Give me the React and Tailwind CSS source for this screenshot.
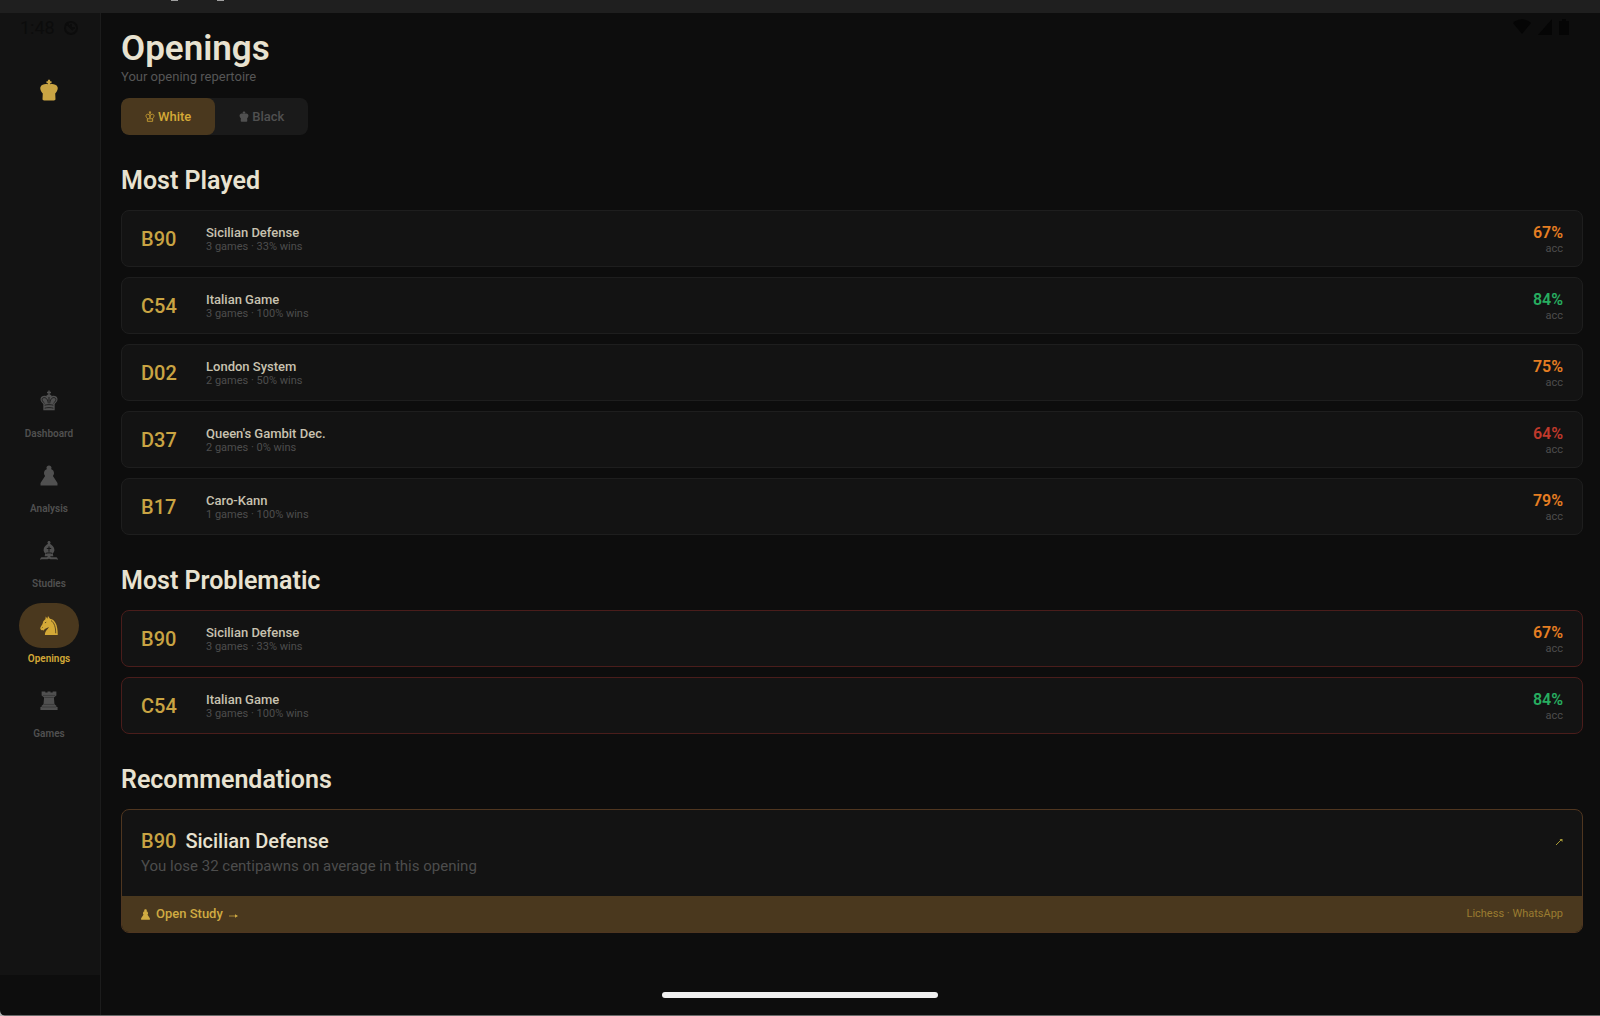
import { useState } from 'react';
import clsx from 'clsx';

const mostPlayed = [
  { eco: 'B90', name: 'Sicilian Defense', games: 3, wins: 33, acc: 67 },
  { eco: 'C54', name: 'Italian Game', games: 3, wins: 100, acc: 84 },
  { eco: 'D02', name: 'London System', games: 2, wins: 50, acc: 75 },
  { eco: 'D37', name: "Queen's Gambit Dec.", games: 2, wins: 0, acc: 64 },
  { eco: 'B17', name: 'Caro-Kann', games: 1, wins: 100, acc: 79 },
];

const mostProblematic = mostPlayed.slice(0, 2);

const navItems = [
  { label: 'Dashboard', icon: KingIcon },
  { label: 'Analysis', icon: PawnIcon },
  { label: 'Studies', icon: BishopIcon },
  { label: 'Openings', icon: KnightIcon },
  { label: 'Games', icon: RookIcon },
];

function SolidKingIcon({ className }) {
  return (
    <svg viewBox="0 0 20 24" className={className} fill="currentColor" aria-hidden="true">
      <path d="M8.800 .5h2.400v1.800h1.600v2.200h-1.600v1.200C13 4.800 18.200 5.200 19.500 8.600c.9 3-1.100 5.400-2.600 7.400l.3 6c0 1.200-.8 1.600-1.700 1.600h-11c-.9 0-1.700-.4-1.700-1.600l.3-6C1.600 14-.4 11.600.5 8.600 1.800 5.200 7 4.800 8.800 5.700V4.500H7.200V2.300h1.600z" />
    </svg>
  );
}

function OutlineKingIcon({ className }) {
  return (
    <svg viewBox="0 0 20 24" className={className} fill="none" stroke="currentColor" strokeWidth="1.800" strokeLinejoin="round" aria-hidden="true">
      <path d="M10 .5v5M7.500 2.700h5M4.200 16C-.5 11.500 1 7 5 7c3 0 4.600 3 5 8 .4-5 2-8 5-8 4 0 5.500 4.500.8 9v6.500H4.200zM4.500 17h11M7.600 8C8 5 12 5 12.400 8" />
    </svg>
  );
}

function KingIcon({ className }) {
  return (
    <svg viewBox="0 0 20 24" className={className} aria-hidden="true">
      <path fill="currentColor" d="M9.200 .5h1.600v1.500h1.500v1.600h-1.500v1.500c1.200.2 2 .9 2.300 1.900 3-1.200 6.200.2 6.600 3 .3 2.300-1.200 4.300-3.200 6.100V23h-13v-6.900C1.500 14.300 0 12.300.3 10c.4-2.800 3.600-4.200 6.600-3 .3-1 1.100-1.700 2.300-1.900V3.600H7.700V2h1.500z" />
      <path fill="none" stroke="#131313" strokeWidth=".9" d="M9.200 15.200C8.800 11.500 7 8.500 4.300 8.700c-3.200.4-2.800 3.500.6 6.500M10.800 15.200c.4-3.700 2.200-6.700 4.900-6.500 3.200.4 2.800 3.500-.6 6.500M10 13V8M5 17.400c3-.9 7-.9 10 0M5 20.800c3-.9 7-.9 10 0" />
    </svg>
  );
}

function PawnIcon({ className }) {
  return (
    <svg viewBox="0 0 20 24" className={className} fill="currentColor" aria-hidden="true">
      <path d="M10 .5c1.700 0 2.900 1.200 2.900 2.600 0 .7-.2 1.200-.6 1.600 2.100.9 3.400 2.500 3.400 4.500 0 1.500-.6 2.500-1.200 3.300l5.200 8v3H.3v-3l5.200-8c-.6-.8-1.200-1.800-1.200-3.300 0-2 1.300-3.600 3.400-4.500-.4-.4-.6-.9-.6-1.600C7.100 1.700 8.300.5 10 .5z" />
    </svg>
  );
}

function BishopIcon({ className }) {
  return (
    <svg viewBox="0 0 22 24" className={className} aria-hidden="true">
      <path fill="currentColor" d="M11 .5c1.100 0 1.900.8 1.900 1.800 0 .6-.3 1.100-.7 1.400 3 1.800 5.400 4.400 5.400 7.600 0 1.700-.8 3-2 4.100l.7 3.700h-3.900c.3 1 1.200 1.300 2.500 1.300h4.300c1.100 0 1.900.6 2.400 1.600v1.500c-1-.6-2-.7-3.300-.7-3 0-6.200.3-7.300-.9-1.100 1.200-4.300.9-7.300.9-1.300 0-2.300.1-3.300.7V22c.5-1 1.300-1.600 2.400-1.600h4.300c1.300 0 2.200-.3 2.500-1.300H5.700l.7-3.700c-1.200-1.100-2-2.400-2-4.100 0-3.200 2.400-5.800 5.400-7.600-.4-.3-.7-.8-.7-1.400C9.100 1.300 9.900.5 11 .5z" />
      <path fill="none" stroke="#131313" strokeWidth="1.200" d="M11 7v6.500M8.300 9.500h5.400M7 15.500c2.500-.8 5.500-.8 8 0" />
    </svg>
  );
}

function KnightIcon({ className }) {
  return (
    <svg viewBox="0 0 22 24" className={className} aria-hidden="true">
      <path fill="currentColor" d="M7 1l2 2.600L9.800.5l2.400 3.200C18.200 4.600 21.700 10.500 21.700 23.500H6c0-4.900 3.600-6.800 5-9.700-1.700 1.200-3.600 1.300-5 2.400-.9.700-1.200 1.900-2.300 1.900L3 17.400l-1 .3c-1.300-.5-1.900-1.700-1.600-2.800C1.300 12.400 3 11 3.500 8.500 3.900 6.600 5 5.500 6.600 4.400z" />
      <path fill="none" stroke="#4a381e" strokeWidth="1" d="M13.500 6c4 2.500 5.700 8 5.700 15.500M6 8.800l1.600-.9M2.300 15l.9-.7" />
    </svg>
  );
}

function RookIcon({ className }) {
  return (
    <svg viewBox="0 0 22 24" className={className} aria-hidden="true">
      <path fill="currentColor" d="M2 1h4.500v1.200h2.700V1h3.600v1.200h2.700V1H20v4.800l-3 2.500.7 8.200 2.300 2V20h1.500v3.500H.5V20H2v-1.500l2.300-2L5 8.300 2 5.800z" />
      <path fill="none" stroke="#131313" strokeWidth=".4" d="M3.500 5.800h15M5.500 8.300h11M4.800 16.800h12.400M2.500 20h17" />
    </svg>
  );
}

function accColor(acc) {
  if (acc >= 80) return 'text-[#27ae60]';
  if (acc >= 65) return 'text-[#e67e22]';
  return 'text-[#c0392b]';
}

function OpeningRow({ opening, danger }) {
  return (
    <li
      className={clsx(
        'flex h-[57px] items-center rounded-lg border bg-[#131313] px-[19px]',
        danger ? 'border-[#4a1d1b]' : 'border-[#1e1e1e]'
      )}
    >
      <span className="w-[65px] text-xl leading-6 font-medium text-[#c9a443]">{opening.eco}</span>
      <div className="flex-1 pt-[2px]">
        <p className="text-[13px] leading-[14px] font-medium text-[#c8c2b0]">{opening.name}</p>
        <p className="text-[11px] leading-[14px] text-[#4d4d4d]">
          {opening.games} games · {opening.wins}% wins
        </p>
      </div>
      <div className="pt-1 text-right">
        <p className={clsx('text-base leading-4 font-semibold', accColor(opening.acc))}>{opening.acc}%</p>
        <p className="text-[11px] leading-4 text-[#4d4d4d]">acc</p>
      </div>
    </li>
  );
}

function OpeningSection({ title, openings, danger }) {
  return (
    <section className="mt-[31px]">
      <h2 className="text-[25px] leading-[30px] font-semibold text-[#e8e2d0]">{title}</h2>
      <ul className="mt-[14px] flex flex-col gap-[10px]">
        {openings.map((o) => (
          <OpeningRow key={o.eco} opening={o} danger={danger} />
        ))}
      </ul>
    </section>
  );
}

function Sidebar({ active, onSelect }) {
  return (
    <aside className="flex w-[101px] shrink-0 flex-col border-r border-[#1c1c1c]">
      <div className="flex flex-1 flex-col items-center bg-[#131313] pr-[2px]">
        <div className="flex w-full items-center gap-2 pt-[5px] pl-5 text-lg leading-5 text-[#0c0c0c]">
          <span>1:48</span>
          <svg viewBox="0 0 16 16" className="size-4" fill="none" stroke="currentColor" strokeWidth="2" aria-hidden="true">
            <circle cx="8" cy="8" r="6" />
            <path d="M3 3l7 7M8 4v4h4" />
          </svg>
        </div>
        <SolidKingIcon className="mt-[41px] h-[22px] w-[18px] text-[#c9a443]" />
        <nav className="mt-[42px] flex flex-1 flex-col items-center justify-center gap-3">
          {navItems.map(({ label, icon: Icon }) => (
            <button
              key={label}
              onClick={() => onSelect(label)}
              className={clsx(
                'flex flex-col items-center gap-1',
                active === label ? 'text-[#d4a937]' : 'text-[#505050]'
              )}
            >
              <span
                className={clsx(
                  'flex h-[45px] w-[60px] items-center justify-center rounded-full',
                  active === label && 'bg-[#4a381e]'
                )}
              >
                <Icon className="h-[21px] w-[18px]" />
              </span>
              <span className="text-[10px] leading-[14px] font-semibold">{label}</span>
            </button>
          ))}
        </nav>
      </div>
      <div className="h-[41px]" />
    </aside>
  );
}

function Recommendation() {
  return (
    <article className="mt-[14px] overflow-hidden rounded-lg border border-[#4f3620] bg-[#131313]">
      <div className="flex h-[86px] items-start justify-between px-[19px] pt-[19px]">
        <div>
          <h3 className="flex gap-[9px] text-xl leading-6 font-medium">
            <span className="text-[#c9a443]">B90</span>
            <span className="text-[#e8e2d0]">Sicilian Defense</span>
          </h3>
          <p className="mt-px text-[15px] leading-6 text-[#4d4d4d]">You lose 32 centipawns on average in this opening</p>
        </div>
        <svg viewBox="0 0 8 8" className="mt-[9px] size-2" aria-hidden="true">
          <path d="M1 7l5-5" fill="none" stroke="#a89a36" strokeWidth="1" />
          <path d="M4.500 1h3v3z" fill="#a89a36" />
        </svg>
      </div>
      <div className="flex h-9 items-center justify-between bg-[#4a381e] px-[19px]">
        <button className="flex items-center gap-[6px] text-[13px] leading-4 font-medium text-[#d0ab42]">
          <PawnIcon className="h-[11px] w-[9px]" />
          Open Study
          <svg viewBox="0 0 9 6" className="mt-[3px] h-[6px] w-[9px]" aria-hidden="true">
            <path d="M0 3h7" fill="none" stroke="currentColor" strokeWidth=".7" />
            <path d="M6 1.300l3 1.700-3 1.700z" fill="currentColor" />
          </svg>
        </button>
        <span className="text-[11px] leading-4 text-[#9a7c30]">Lichess · WhatsApp</span>
      </div>
    </article>
  );
}

export default function App() {
  const [page, setPage] = useState('Openings');
  const [color, setColor] = useState('white');

  return (
    <div className="relative flex min-h-screen flex-col bg-[#0d0d0d] font-['Roboto',sans-serif]">
      <div className="flex h-[13px] items-start gap-[39px] bg-[#1f1f1f] pl-[171px]">
        <span className="h-px w-[7px] bg-[#a0a0a0]" />
        <span className="h-px w-[7px] bg-[#a0a0a0]" />
      </div>

      <div className="flex flex-1">
        <Sidebar active={page} onSelect={setPage} />

        <main className="flex-1 pt-[15px] pr-[17px] pb-20 pl-5">
          <h1 className="text-[35px] leading-[41px] font-semibold text-[#e8e2d0]">Openings</h1>
          <p className="text-[13px] leading-4 text-[#565656]">Your opening repertoire</p>

          <div className="mt-[13px] inline-flex h-[37px] overflow-hidden rounded-lg bg-[#1a1a1a] align-top">
            <button
              onClick={() => setColor('white')}
              className={clsx(
                'flex items-center gap-[3px] rounded-lg px-[24px] text-[13px] font-medium',
                color === 'white' ? 'bg-[#4a381e] text-[#d4a937]' : 'text-[#505050]'
              )}
            >
              <OutlineKingIcon className="h-[11px] w-[10px]" />
              White
            </button>
            <button
              onClick={() => setColor('black')}
              className={clsx(
                'flex items-center gap-[3px] rounded-lg px-[24px] text-[13px] font-medium',
                color === 'black' ? 'bg-[#4a381e] text-[#d4a937]' : 'text-[#505050]'
              )}
            >
              <SolidKingIcon className="h-[11px] w-[10px]" />
              Black
            </button>
          </div>

          <OpeningSection title="Most Played" openings={mostPlayed} />
          <OpeningSection title="Most Problematic" openings={mostProblematic} danger />

          <section className="mt-[31px]">
            <h2 className="text-[25px] leading-[30px] font-semibold text-[#e8e2d0]">Recommendations</h2>
            <Recommendation />
          </section>
        </main>
      </div>

      {/* device status icons */}
      <div className="absolute top-[19px] right-[31px] flex gap-[7px] text-[#050505]">
        <svg viewBox="0 0 18 16" className="h-4 w-[18px]" fill="currentColor" aria-hidden="true">
          <path d="M0 4c5-5 13-5 18 0L9 15z" />
        </svg>
        <svg viewBox="0 0 14 16" className="h-4 w-[14px]" fill="currentColor" aria-hidden="true">
          <path d="M14 0v16H0z" />
        </svg>
        <svg viewBox="0 0 10 16" className="h-4 w-[10px]" fill="currentColor" aria-hidden="true">
          <path d="M3 0h4v2h3v14H0V2h3z" />
        </svg>
      </div>

      {/* home indicator */}
      <div className="absolute bottom-[18px] left-1/2 h-[6px] w-[276px] -translate-x-1/2 rounded-full bg-[#f0f0f0]" />

      {/* window edge and its rounded corner */}
      <div className="absolute inset-x-0 bottom-0 h-px bg-[#6a6a6a]" />
      <svg viewBox="0 0 6 6" className="absolute bottom-0 left-0 size-[6px]" aria-hidden="true">
        <path d="M0 0c0 3.500 2.500 6 6 6H0z" fill="#b0b0b0" />
      </svg>
    </div>
  );
}
